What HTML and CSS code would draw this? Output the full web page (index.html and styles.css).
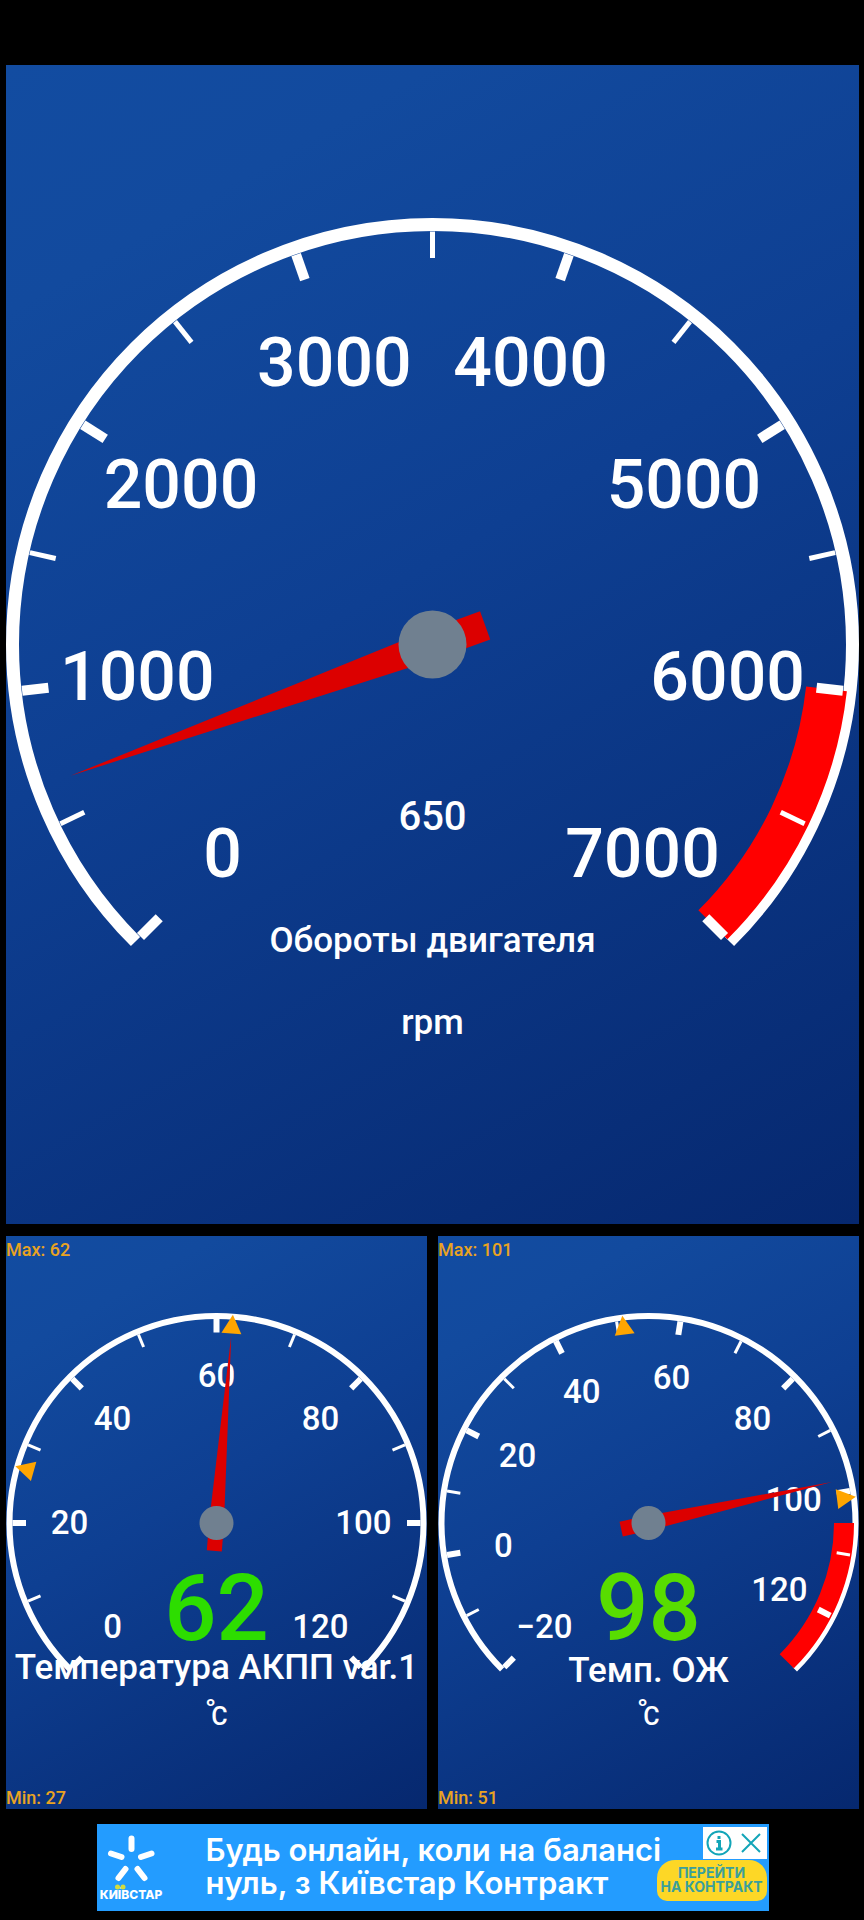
FILE: index.html
```
<!DOCTYPE html>
<html lang="ru">
<head>
    <meta charset="UTF-8">
    <meta name="viewport" content="width=device-width, initial-scale=1.0">
    <title>Dashboard</title>
    <link rel="stylesheet" href="styles.css">
</head>
<body>
    <main class="dashboard">
        <section class="panel panel-wide" aria-label="Обороты двигателя">
            <svg class="gauge gauge-large" id="rpm" viewBox="0 0 853 1159"></svg>
        </section>
        <section class="panel" aria-label="Температура АКПП var.1">
            <svg class="gauge" id="gearbox" viewBox="0 0 421 573"></svg>
        </section>
        <section class="panel" aria-label="Темп. ОЖ">
            <svg class="gauge" id="coolant" viewBox="0 0 421 573"></svg>
        </section>
    </main>

    <aside class="ad">
        <svg class="ad-logo" viewBox="0 0 68 86">
            <g class="logo-rays">
                <path d="M34.500 14.500V25M14 29.500L24.500 33M54.500 29.500L44 33M28.500 45L21.500 54M40.500 45L47.500 54"/>
            </g>
            <text class="logo-name" x="34" y="75">КИЇВСТАР</text>
            <circle class="logo-dot" cx="20.500" cy="63" r="2.500"/>
            <circle class="logo-dot" cx="26" cy="63" r="2.500"/>
        </svg>
        <p class="ad-text">Будь онлайн, коли на балансі<br>нуль, з Київстар Контракт</p>
        <div class="ad-side">
            <div class="ad-choices">
                <button class="ad-button" aria-label="Info">
                    <svg viewBox="0 0 26 26">
                        <circle cx="13" cy="13" r="11.500"/>
                        <path class="thick" d="M10.500 11.500H13.500V18.500M10 19H16.500M13 6V9"/>
                    </svg>
                </button>
                <button class="ad-button" aria-label="Close">
                    <svg viewBox="0 0 26 26"><path d="M4 4L22 22M22 4L4 22"/></svg>
                </button>
            </div>
            <a class="ad-link" href="#">ПЕРЕЙТИ<br>НА КОНТРАКТ</a>
        </div>
    </aside>

    <script>
        const SVG_NS = 'http://www.w3.org/2000/svg';

        function add(svg, tag, className, attrs, text) {
            const el = document.createElementNS(SVG_NS, tag);
            el.setAttribute('class', className);
            for (const key in attrs) {
                el.setAttribute(key, attrs[key]);
            }
            if (text !== undefined) {
                el.textContent = text;
            }
            svg.appendChild(el);
            return el;
        }

        // The scale always sweeps 270 degrees, 0 degrees is straight up
        function toAngle(g, value) {
            return (value - g.min) / (g.max - g.min) * 270 - 135;
        }

        function point(g, r, angle) {
            const a = angle * Math.PI / 180;
            return [g.cx + r * Math.sin(a), g.cy - r * Math.cos(a)];
        }

        function arc(g, r, from, to) {
            const start = point(g, r, from);
            const end = point(g, r, to);
            const large = to - from > 180 ? 1 : 0;
            return `M${start} A${r} ${r} 0 ${large} 1 ${end}`;
        }

        function drawMarker(svg, g, value) {
            add(svg, 'path', 'marker', {
                d: `M${g.cx} ${g.cy - 209}l-10 19h20z`,
                transform: `rotate(${toAngle(g, value)} ${g.cx} ${g.cy})`
            });
        }

        function drawUnit(svg, g) {
            if (g.unit !== '˚C') {
                add(svg, 'text', 'unit', { x: g.cx, y: g.unitY }, g.unit);
                return;
            }
            // The ring sits above the left edge of the C
            add(svg, 'text', 'unit', { x: g.cx + 3, y: g.unitY }, 'C');
            add(svg, 'text', 'degree', { x: g.cx - 6, y: g.unitY }, '˚');
        }

        function drawGauge(id, g) {
            const svg = document.getElementById(id);

            add(svg, 'path', 'ring', { d: arc(g, g.ringR, -135, 135) });
            if (g.redFrom !== undefined) {
                add(svg, 'path', 'red-zone', { d: arc(g, g.redR, toAngle(g, g.redFrom), 135) });
            }

            for (let v = g.min; v <= g.max; v += g.step / 2) {
                const major = (v - g.min) % g.step === 0;
                const angle = toAngle(g, v);
                if (!major && v === g.max) {
                    continue;
                }
                add(svg, 'path', major ? 'tick tick-major' : 'tick', {
                    d: `M${point(g, g.tickOuter, angle)} L${point(g, g.tickInner, angle)}`
                });
                if (major) {
                    const p = point(g, g.labelR, angle);
                    add(svg, 'text', 'label', { x: p[0], y: p[1] + g.labelDrop }, String(v).replace('-', '−'));
                }
            }

            add(svg, 'text', 'value', { x: g.cx, y: g.valueY, fill: g.valueColor }, g.value);
            add(svg, 'text', 'title', { x: g.cx, y: g.titleY }, g.title);
            drawUnit(svg, g);

            if (g.peakMax !== undefined) {
                add(svg, 'text', 'peak', { x: 0, y: 20 }, 'Max: ' + g.peakMax);
                add(svg, 'text', 'peak', { x: 0, y: 568 }, 'Min: ' + g.peakMin);
                drawMarker(svg, g, g.peakMin);
                drawMarker(svg, g, g.peakMax);
            }

            add(svg, 'path', 'needle', {
                d: `M${g.cx - g.needleW} ${g.cy + g.tail}h${g.needleW * 2}V${g.cy}L${g.cx} ${g.cy - g.needleR}L${g.cx - g.needleW} ${g.cy}z`,
                transform: `rotate(${toAngle(g, g.value)} ${g.cx} ${g.cy})`
            });
            add(svg, 'circle', 'hub', { cx: g.cx, cy: g.cy, r: g.hubR });
        }

        const small = {
            cx: 210.5, cy: 287, ringR: 207, redR: 195.5, tickOuter: 204, tickInner: 190.5,
            labelR: 147, labelDrop: 11, needleR: 188, needleW: 7.5, tail: 28, hubR: 17,
            step: 20, valueY: 404, unitY: 489, unit: '˚C'
        };

        drawGauge('rpm', {
            cx: 426.5, cy: 579.5, ringR: 420, redR: 396.5, tickOuter: 413, tickInner: 386.5,
            labelR: 297, labelDrop: 22, needleR: 385, needleW: 15, tail: 56, hubR: 34,
            min: 0, max: 7000, step: 1000, redFrom: 6000,
            value: 650, valueY: 765, valueColor: '#fff',
            title: 'Обороты двигателя', titleY: 887, unit: 'rpm', unitY: 969
        });
        drawGauge('gearbox', {
            ...small, min: 0, max: 120, value: 62, valueColor: '#2ddd00',
            title: 'Температура АКПП var.1', titleY: 443, peakMin: 27, peakMax: 62
        });
        drawGauge('coolant', {
            ...small, min: -20, max: 130, redFrom: 105, value: 98, valueColor: '#58dd00',
            title: 'Темп. ОЖ', titleY: 446, peakMin: 51, peakMax: 101
        });
    </script>
</body>
</html>
```
FILE: styles.css
```
body {
    margin: 0;
    padding: 65px 5px 9px 6px;
    background: #000;
    font-family: Roboto, 'Noto Sans', sans-serif;
    font-weight: 500;
}

.dashboard {
    display: grid;
    grid-template-columns: 1fr 1fr;
    gap: 12px 11px;
}

.panel {
    background: linear-gradient(150deg, #124ca1, #124a9e 15%, #0e3f92 45%, #06286f);
}

.panel-wide {
    grid-column: span 2;
}

/* Gauges */
.gauge {
    display: block;
    width: 100%;
    height: auto;
    fill: #fff;
    text-anchor: middle;
}

.ring {
    fill: none;
    stroke: #fff;
    stroke-width: 6px;
}

.red-zone {
    fill: none;
    stroke: #f00;
    stroke-width: 20px;
}

.tick {
    stroke: #fff;
    stroke-width: 3px;
}

.tick-major {
    stroke-width: 6px;
}

.label { font-size: 33px; }
.value { font-size: 92px; }
.title { font-size: 35px; }
.unit { font-size: 25px; }

.degree {
    font-size: 35px;
    font-weight: 700;
}

.peak {
    font-size: 18px;
    fill: #e9a322;
    text-anchor: start;
}

.marker { fill: #ffa500; }
.needle { fill: #dc0000; }
.hub { fill: #708090; }

.gauge-large .ring { stroke-width: 13px; }
.gauge-large .red-zone { stroke-width: 41px; }
.gauge-large .tick { stroke-width: 5px; }
.gauge-large .tick-major { stroke-width: 10px; }
.gauge-large .label { font-size: 68px; }
.gauge-large .value { font-size: 40px; }
.gauge-large .unit { font-size: 35px; }

/* Banner */
.ad {
    display: flex;
    max-width: 672px;
    height: 87px;
    margin: 15px auto 0;
    background: #239cff;
    color: #fff;
    font-family: Inter, 'Open Sans', sans-serif;
}

.ad-logo {
    flex: none;
    width: 68px;
    height: 86px;
}

.logo-rays {
    fill: none;
    stroke: #fff;
    stroke-width: 6px;
    stroke-linecap: round;
}

.logo-name {
    fill: #fff;
    font-size: 12px;
    font-weight: 800;
    text-anchor: middle;
}

.logo-dot { fill: #d5dc3c; }

.ad-text {
    flex: 1;
    min-width: 0;
    margin: 9px 0 0 41px;
    font-size: 31px;
    font-weight: 600;
    line-height: 33px;
    white-space: nowrap;
}

.ad-side {
    display: flex;
    flex: none;
    flex-direction: column;
    align-items: flex-end;
    gap: 1px;
    width: 110px;
    padding: 3px 2px 0 0;
}

.ad-choices {
    display: flex;
    gap: 6px;
    padding: 3px;
    background: #fff;
}

.ad-button {
    width: 26px;
    height: 26px;
    padding: 0;
    border: none;
    background: none;
    cursor: pointer;
}

.ad-button svg {
    display: block;
    fill: none;
    stroke: #12a5b8;
    stroke-width: 2px;
}

.ad-button .thick { stroke-width: 3px; }

.ad-link {
    width: 110px;
    box-sizing: border-box;
    padding: 6px 0 7px;
    border-radius: 18px 18px 10px 10px;
    background: #fdd726;
    color: #3a9f9c;
    font-size: 14px;
    font-weight: 700;
    line-height: 14px;
    text-align: center;
    text-decoration: none;
    white-space: nowrap;
}
```
